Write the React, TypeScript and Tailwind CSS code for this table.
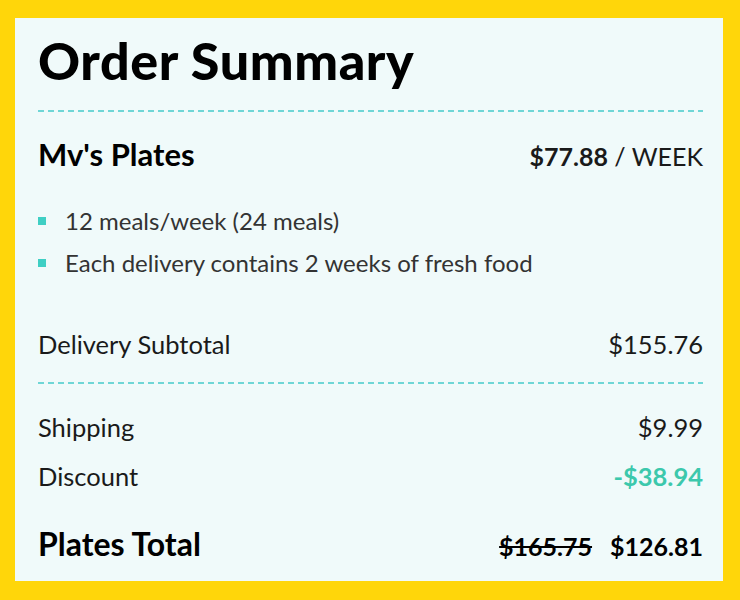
const dashed =
  "h-[2px] w-full bg-[repeating-linear-gradient(to_right,#6fd6d6_0_6px,transparent_6px_10px)]";

const bullets = ["12 meals/week (24 meals)", "Each delivery contains 2 weeks of fresh food"];

function Row({ label, value, valueClass = "" }: { label: string; value: string; valueClass?: string }) {
  return (
    <div className="flex items-baseline justify-between text-[25.5px] leading-[32px] text-[#1a1a1a]">
      <span>{label}</span>
      <span className={valueClass}>{value}</span>
    </div>
  );
}

export default function App() {
  return (
    <div className="w-[740px] h-[600px] bg-[#ffd60a] pt-[18px] pl-[15px] pr-[17px] pb-[19px] font-['Lato',sans-serif]">
      <div className="h-full bg-[#f0fafa] pl-[23px] pr-[20px] pt-[16px]">
        <h1 className="text-[52px] leading-[52px] font-black text-black tracking-[0.6px]">Order Summary</h1>

        <div className={`${dashed} mt-[24px]`} />

        {/* plan */}
        <div className="mt-[24px] flex items-baseline justify-between leading-[36px]">
          <span className="text-[31px] font-bold text-black">Mv's Plates</span>
          <span className="text-[25px] text-[#1a1a1a]">
            <span className="font-bold">$77.88</span> / WEEK
          </span>
        </div>

        <ul className="mt-[32px] flex flex-col gap-[12px]">
          {bullets.map((b) => (
            <li key={b} className="flex items-center text-[24px] leading-[30px] text-[#333]">
              <span className="w-[8px] h-[8px] bg-[#3fcfc4] mr-[19px] shrink-0" />
              {b}
            </li>
          ))}
        </ul>

        <div className="mt-[50px]">
          <Row label="Delivery Subtotal" value="$155.76" />
        </div>

        <div className={`${dashed} mt-[22px]`} />

        <div className="mt-[27px] flex flex-col gap-[17px]">
          <Row label="Shipping" value="$9.99" />
          <Row label="Discount" value="-$38.94" valueClass="font-bold text-[#3cc8ac]" />
        </div>

        <div className="mt-[32px] flex items-baseline justify-between font-bold text-black leading-[40px]">
          <span className="text-[32px]">Plates Total</span>
          <span className="text-[25px]">
            <span className="line-through">$165.75</span>
            <span className="ml-[18px]">$126.81</span>
          </span>
        </div>
      </div>
    </div>
  );
}
